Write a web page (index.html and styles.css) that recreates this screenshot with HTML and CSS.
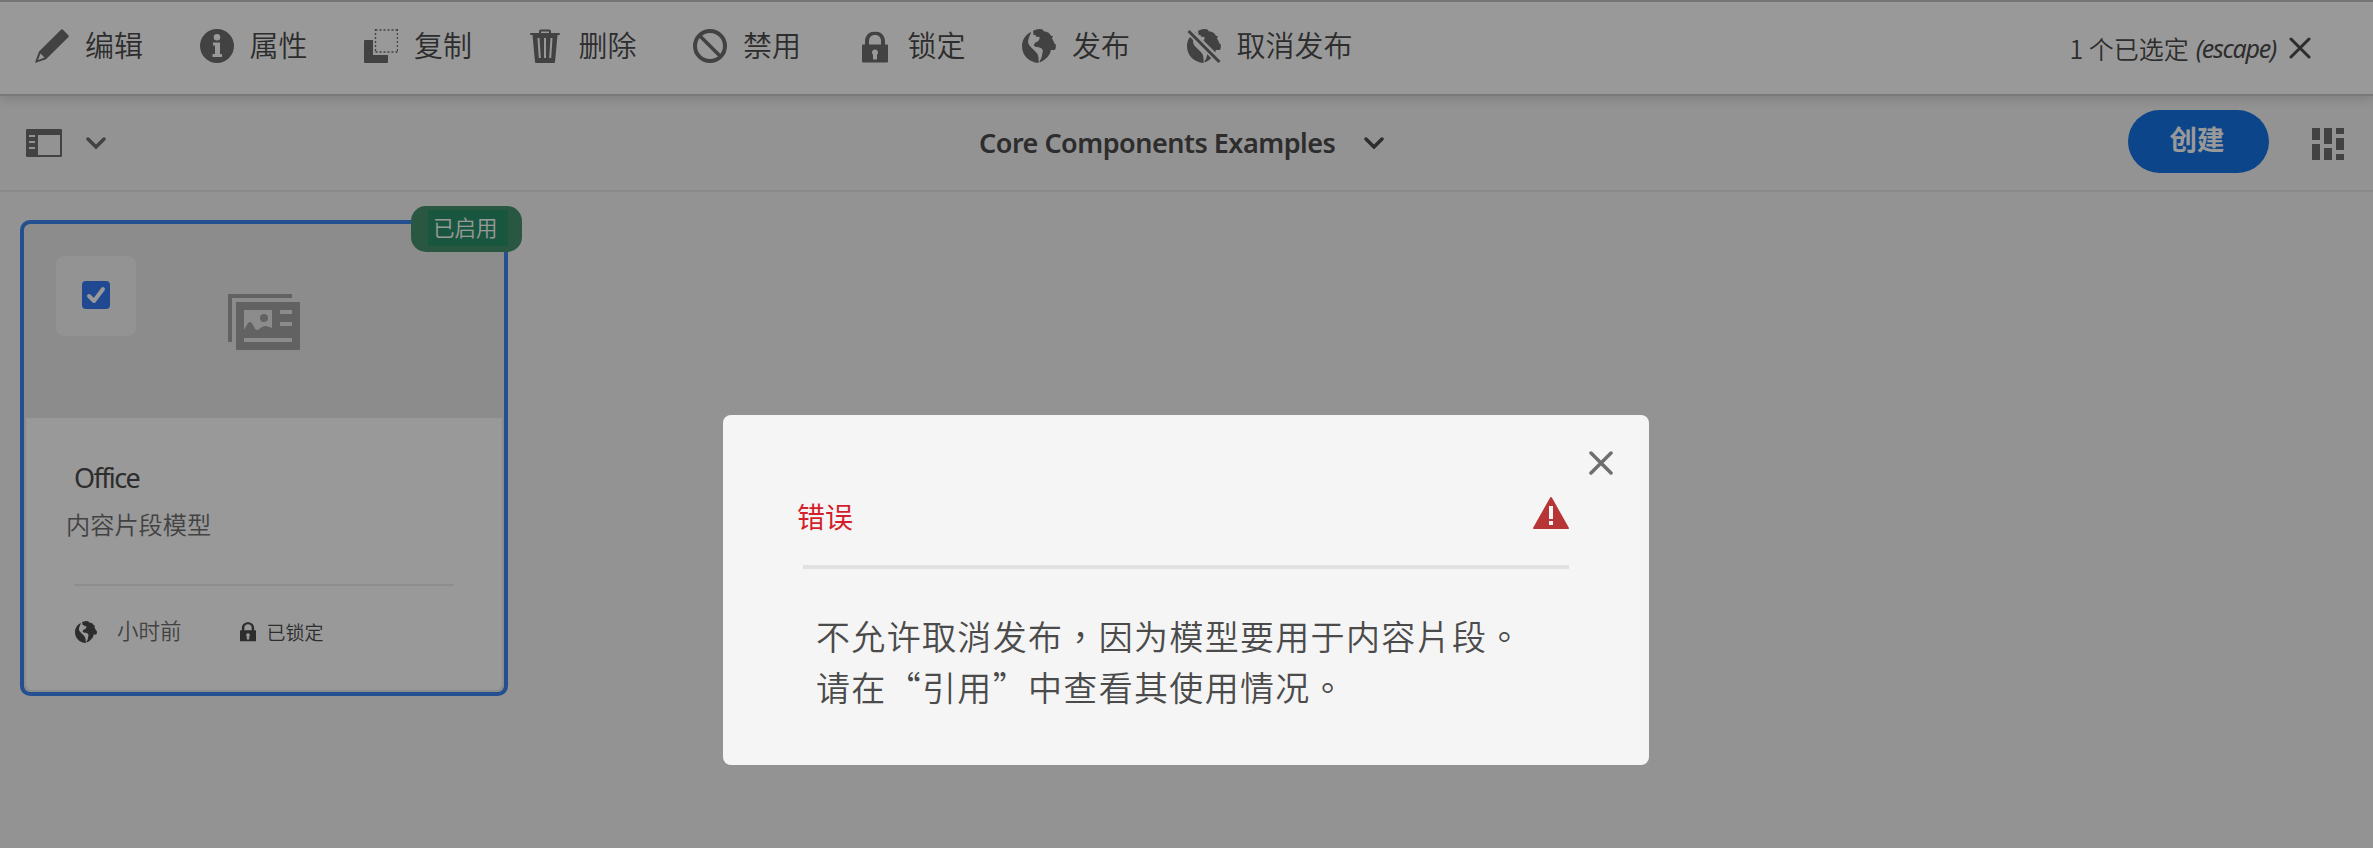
FILE: index.html
```html
<!DOCTYPE html>
<html lang="zh-CN">
<head>
<meta charset="utf-8">
<title>Core Components Examples</title>
<link rel="stylesheet" href="styles.css">
</head>
<body>
<svg class="defs" width="0" height="0" aria-hidden="true">
  <symbol id="globe" viewBox="0 0 102 102">
    <path d="M27 9C10 17 0 33 0 51c0 28 20 49 50 51 0-10 0-20-4-28-6-9-16-15-23-24-5-6-6-14-3-21 2-8 6-12 7-20z"/>
    <path d="M33 5l12-4 10-1 8 2 2 5 8 1 8 4 6 8 6 2-3 6 6 12 2 4 3 2c1 6 1 12-2 16-5 3-9-1-13 2 2 12-20 33-32 36l-2-3c6-7 9-17 9-25 3-4 2-9-3-14-4-4-12-3-18-5l-5-4 4-8 9-4 5-8-1-6-8 1-4-6-5 0z"/>
  </symbol>
  <symbol id="lock" viewBox="0 0 26 32">
    <path fill-rule="evenodd" d="M1 13h2v-3C3 4 7 0 13 0s10 4 10 10v3h2q1 0 1 1v16q0 1-1 1H1q-1 0-1-1V14q0-1 1-1zm6 0h12v-3c0-4-2-6.500-6-6.500S7 6 7 10zm6 5a3 3 0 0 0-2 5.300V28h4v-4.700A3 3 0 0 0 13 18z"/>
  </symbol>
</svg>

<header class="toolbar">
  <nav class="actions">
    <a class="action"><svg class="icon" viewBox="0 0 34 34"><path fill-rule="evenodd" d="M26 .8q1-1 2 0l5.300 5.500q1 1 0 2L11 30.200.8 33.800q-.8.200-.6-.8L4 22.500zM5.500 24.500L3 31l6.500-2.500z"/></svg>编辑</a>
    <a class="action"><svg class="icon" viewBox="0 0 34 34"><path fill-rule="evenodd" d="M17 0a17 17 0 1 0 0 34 17 17 0 0 0 0-34zm0 5a3.300 3.300 0 1 1 0 6.600A3.300 3.300 0 0 1 17 5zm-4 8.500h7V25h2v3H12.500v-3H15v-8.500h-2z"/></svg>属性</a>
    <a class="action"><svg class="icon" viewBox="0 0 34 34"><path d="M1 11h8v15h15v7q0 1-1 1H1q-1 0-1-1V12q0-1 1-1z"/><path d="M11.500 1H34M11.500 23H34M11.500 0v24M33.500 0v24" fill="none" stroke="currentColor" stroke-width="1.400" stroke-dasharray="2 2"/></svg>复制</a>
    <a class="action"><svg class="icon" viewBox="0 0 34 34"><path fill-rule="evenodd" d="M10 4V2.500Q10 .5 12 .5h8q2 0 2 2V4h8q1 0 1 1t-1 1h-1.500L26 33q0 1-1 1H7q-1 0-1-1L3.500 6H2Q1 6 1 5t1-1zm2 0h8V2.500h-8zM8.500 9l1.300 20h2L10.500 9zM15 9v20h2V9zm6.500 0l-1.300 20h2L23.500 9z"/></svg>删除</a>
    <a class="action"><svg class="icon" viewBox="0 0 34 34"><path d="M6.500 6.500l21 21" stroke="currentColor" stroke-width="3.600"/><circle cx="17" cy="17" r="15" fill="none" stroke="currentColor" stroke-width="4"/></svg>禁用</a>
    <a class="action"><svg class="icon" viewBox="0 0 34 34"><use href="#lock" x="4" y="2.500" width="26" height="32"/></svg>锁定</a>
    <a class="action"><svg class="icon"><use href="#globe"/></svg>发布</a>
    <a class="action"><svg class="icon" viewBox="0 0 34 34"><mask id="slash"><path fill="#fff" d="M0 0h34v34H0z"/><path d="M-2-2l38 38" stroke="#000" stroke-width="7"/></mask><g mask="url(#slash)"><use href="#globe" width="34" height="34"/></g><path d="M1.500 2l31 31" stroke="currentColor" stroke-width="3"/></svg>取消发布</a>
  </nav>
  <div class="selection">
    <span class="count">1 个已选定</span>
    <em class="escape">(escape)</em>
    <svg class="clear" viewBox="0 0 22 22"><path d="M2 2l18 18M20 2L2 20"/></svg>
  </div>
</header>

<div class="titlebar">
  <div class="rail">
    <svg class="rail-icon" viewBox="0 0 36 28"><path fill-rule="evenodd" d="M1 0h34q1 0 1 1v26q0 1-1 1H1q-1 0-1-1V1q0-1 1-1zm11 6v20h22V6zM3 6v2h6V6zm0 6v2h6v-2zm0 6v2h6v-2z"/></svg>
    <svg class="chevron" viewBox="0 0 20 12"><path d="M2 2l8 8 8-8"/></svg>
  </div>
  <div class="crumb">
    <h1 class="title">Core Components Examples</h1>
    <svg class="chevron" viewBox="0 0 20 12"><path d="M2 2l8 8 8-8"/></svg>
  </div>
  <div class="tools">
    <button class="create">创建</button>
    <svg class="view" viewBox="0 0 32 32"><path d="M0 0h8v12H0zM0 16h8v16H0zM12 0h8v16h-8zM12 20h8v12h-8zM24 0h8v6h-8zM24 10h8v12h-8zM24 26h8v6h-8z"/></svg>
  </div>
</div>

<main class="content">
  <article class="card">
    <span class="badge"><span class="badge-label">已启用</span></span>
    <div class="preview">
      <div class="check"><svg class="checkbox" viewBox="0 0 28 28"><rect width="28" height="28" rx="4"/><path d="M7 15l5 5 9-12"/></svg></div>
      <svg class="model" viewBox="0 0 72 56"><path fill-rule="evenodd" d="M1 0h63v4H4v44H1q-1 0-1-1V1q0-1 1-1zM9 8h62q1 0 1 1v46q0 1-1 1H9q-1 0-1-1V9q0-1 1-1zm7 8v20c3-5 4-8 6-8 3 0 4 8 7 8 2 0 5-4 8-4s4 1 7 2V16zm20 4a4 4 0 1 1 0 8 4 4 0 0 1 0-8zm16-4v4h12v-4zm0 12v4h12v-4zM16 44v4h48v-4z"/></svg>
    </div>
    <div class="info">
      <h2 class="name">Office</h2>
      <p class="kind">内容片段模型</p>
      <div class="meta">
        <svg class="meta-globe"><use href="#globe"/></svg><span class="ago">小时前</span>
        <svg class="meta-lock"><use href="#lock"/></svg><span class="locked">已锁定</span>
      </div>
    </div>
  </article>
</main>

<div class="overlay">
  <section class="dialog" role="alertdialog">
    <svg class="close" viewBox="0 0 24 24"><path d="M2 2l20 20M22 2L2 22"/></svg>
    <div class="dialog-head">
      <h2 class="dialog-title">错误</h2>
      <svg class="warn" viewBox="0 0 36 32"><path fill-rule="evenodd" d="M17 .8q1-1.500 2 0L36 31q.3 1-1 1H1q-1.300 0-1-1zM16 9v13h4V9zm0 15v4h4v-4z"/></svg>
    </div>
    <hr class="rule">
    <p class="message" lang="zh-TW">不允许取消发布，因为模型要用于内容片段。<br>请在“引用”中查看其使用情况。</p>
  </section>
</div>
</body>
</html>
```
FILE: styles.css
```css
* { box-sizing: border-box; }
body {
  margin: 0;
  height: 848px;
  overflow: hidden;
  background: #f5f5f5;
  color: #4b4b4b;
  font-family: "Noto Sans", "Noto Sans CJK SC", sans-serif;
}
h1, h2, p { margin: 0; font-weight: 400; white-space: nowrap; }
svg { display: block; flex: none; fill: currentColor; }
.defs { position: absolute; }

.toolbar {
  position: relative;
  display: flex;
  justify-content: space-between;
  height: 96px;
  padding: 0 62px 0 35px;
  background: #fff;
  border-top: 2px solid #c4c4c4;
  border-bottom: 2px solid #cacaca;
  box-shadow: 0 2px 12px rgba(0, 0, 0, .16);
}
.actions { display: flex; gap: 56.500px; padding-top: 27px; }
.action {
  display: flex;
  gap: 16px;
  height: 34px;
  font: 350 29px/30px "Noto Sans CJK SC", sans-serif;
  white-space: nowrap;
}
.icon { width: 34px; height: 34px; color: #6e6e6e; }
.selection {
  display: flex;
  align-items: center;
  height: 91px;
  font-size: 25px;
  white-space: nowrap;
}
.count { font: 350 25px/30px "Noto Sans CJK SC", sans-serif; }
.escape { margin-left: 7px; letter-spacing: -1.250px; }
.clear { width: 22px; height: 22px; margin-left: 13px; }
.clear path, .close path, .chevron path { fill: none; stroke: currentColor; stroke-linecap: round; stroke-width: 3.500; }
.clear path { stroke-width: 3; }

.titlebar {
  display: grid;
  grid-template-columns: 979px 1fr auto;
  align-items: center;
  height: 96px;
  padding: 0 29px 0 0;
  border-bottom: 2px solid #e4e4e4;
}
.rail { display: flex; align-items: center; gap: 24px; padding-left: 26px; color: #6e6e6e; }
.rail-icon { width: 36px; height: 28px; }
.chevron { width: 20px; height: 12px; }
.crumb { display: flex; align-items: center; gap: 28px; }
.title { width: 357px; font-size: 27px; font-weight: 600; letter-spacing: -.5px; line-height: 36px; }
.tools { display: flex; align-items: center; gap: 43px; color: #6e6e6e; }
.create {
  width: 141px;
  height: 63px;
  margin-top: -3px;
  padding: 0 3px 8px 0;
  border: 0;
  border-radius: 32px;
  background: #1473e6;
  color: #fff;
  font: 700 27.500px/40px "Noto Sans CJK SC", sans-serif;
}
.view { width: 32px; height: 32px; margin-top: 2px; }

.content { padding: 28px 20px; }
.card {
  position: relative;
  width: 488px;
  height: 476px;
  padding: 0 2px 2px;
  border: 4px solid #3f85ee;
  border-radius: 10px;
  background: #e9e9e9;
}
.badge {
  position: absolute;
  top: -18px;
  right: -18px;
  padding: 4px 14px 6px 17px;
  border-radius: 15px;
  background: #47926f;
}
.badge-label {
  display: block;
  width: 80px;
  height: 36px;
  padding-left: 5px;
  background: #2a906c;
  color: #fff;
  font: 350 21.500px/34px "Noto Sans CJK SC", sans-serif;
}
.preview { display: flex; gap: 92px; height: 194px; padding: 32px 30px; }
.check { display: grid; place-items: center; width: 80px; height: 80px; padding-bottom: 2px; border-radius: 8px; background: #f5f5f5; }
.checkbox { width: 28px; height: 28px; fill: #377af2; }
.checkbox path { fill: none; stroke: #fff; stroke-width: 4; stroke-linecap: round; stroke-linejoin: round; }
.model { width: 72px; height: 56px; margin-top: 38px; color: #a3a3a3; }
.info { height: 272px; padding: 40px 48px 0; background: #fff; border-radius: 0 0 6px 6px; }
.name { font-size: 27px; line-height: 40px; letter-spacing: -1.600px; }
.kind {
  margin-left: -8px;
  padding-top: 8px;
  color: #6e6e6e;
  font: 350 24.200px/36px "Noto Sans CJK SC", sans-serif;
}
.meta {
  display: flex;
  align-items: center;
  width: 380px;
  margin-top: 42px;
  padding-top: 31px;
  border-top: 2px solid #ebebeb;
  font: 350 21.500px/30px "Noto Sans CJK SC", sans-serif;
  white-space: nowrap;
}
.meta-globe { width: 22px; height: 22px; margin-left: 1px; }
.ago { margin: -2px 0 2px 20px; color: #6e6e6e; }
.meta-lock { width: 16px; height: 20px; margin-left: 58px; }
.locked { margin-left: 11px; font-size: 19px; }

.overlay {
  position: fixed;
  inset: 0;
  padding: 415px 0 0 723px;
  background: rgba(0, 0, 0, .4);
}
.dialog {
  width: 926px;
  height: 350px;
  padding: 36px 36px 0 74px;
  border-radius: 8px;
  background: #f5f5f5;
}
.close { width: 24px; height: 24px; margin-left: auto; color: #6e6e6e; }
.dialog-head {
  display: flex;
  justify-content: space-between;
  height: 60px;
  margin: 22px 44px 0 0;
}
.dialog-title { color: #d31f2b; font: 400 28px/39px "Noto Sans CJK SC", sans-serif; }
.warn { width: 36px; height: 32px; color: #b83535; }
.rule { height: 4px; margin: 8px 44px 0 6px; border: 0; background: #e1e1e1; }
.message {
  padding: 41px 0 0 19px;
  font: 350 34px/51px "Noto Sans CJK TC", sans-serif;
  letter-spacing: 1.330px;
}
```
